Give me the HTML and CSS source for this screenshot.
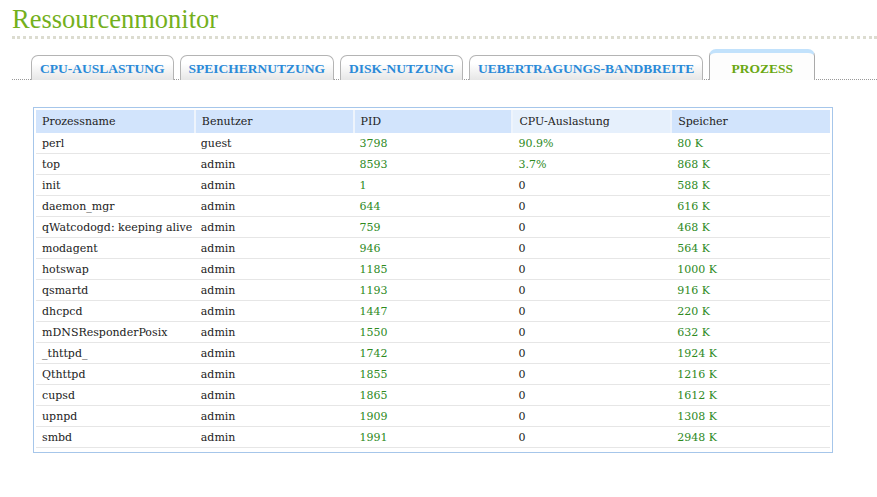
FILE: index.html
```html
<!DOCTYPE html>
<html lang="de">
<head>
    <meta charset="UTF-8">
    <title>Ressourcenmonitor</title>
    <link rel="stylesheet" href="styles.css">
</head>
<body>
    <h1 class="title">Ressourcenmonitor</h1>
    <div class="tabs">
        <a class="tab">CPU-AUSLASTUNG</a>
        <a class="tab">SPEICHERNUTZUNG</a>
        <a class="tab">DISK-NUTZUNG</a>
        <a class="tab">UEBERTRAGUNGS-BANDBREITE</a>
        <a class="tab active">PROZESS</a>
    </div>
    <div class="grid-box">
        <table class="grid">
            <thead>
                <tr>
                    <th>Prozessname</th>
                    <th>Benutzer</th>
                    <th>PID</th>
                    <th class="sorted">CPU-Auslastung</th>
                    <th>Speicher</th>
                </tr>
            </thead>
            <tbody>
                <tr><td>perl</td><td>guest</td><td class="num">3798</td><td class="num">90.9%</td><td class="num">80 K</td></tr>
                <tr><td>top</td><td>admin</td><td class="num">8593</td><td class="num">3.7%</td><td class="num">868 K</td></tr>
                <tr><td>init</td><td>admin</td><td class="num">1</td><td>0</td><td class="num">588 K</td></tr>
                <tr><td>daemon_mgr</td><td>admin</td><td class="num">644</td><td>0</td><td class="num">616 K</td></tr>
                <tr><td>qWatcodogd: keeping alive</td><td>admin</td><td class="num">759</td><td>0</td><td class="num">468 K</td></tr>
                <tr><td>modagent</td><td>admin</td><td class="num">946</td><td>0</td><td class="num">564 K</td></tr>
                <tr><td>hotswap</td><td>admin</td><td class="num">1185</td><td>0</td><td class="num">1000 K</td></tr>
                <tr><td>qsmartd</td><td>admin</td><td class="num">1193</td><td>0</td><td class="num">916 K</td></tr>
                <tr><td>dhcpcd</td><td>admin</td><td class="num">1447</td><td>0</td><td class="num">220 K</td></tr>
                <tr><td>mDNSResponderPosix</td><td>admin</td><td class="num">1550</td><td>0</td><td class="num">632 K</td></tr>
                <tr><td>_thttpd_</td><td>admin</td><td class="num">1742</td><td>0</td><td class="num">1924 K</td></tr>
                <tr><td>Qthttpd</td><td>admin</td><td class="num">1855</td><td>0</td><td class="num">1216 K</td></tr>
                <tr><td>cupsd</td><td>admin</td><td class="num">1865</td><td>0</td><td class="num">1612 K</td></tr>
                <tr><td>upnpd</td><td>admin</td><td class="num">1909</td><td>0</td><td class="num">1308 K</td></tr>
                <tr><td>smbd</td><td>admin</td><td class="num">1991</td><td>0</td><td class="num">2948 K</td></tr>
            </tbody>
        </table>
    </div>
</body>
</html>
```

FILE: styles.css
```css
body {
    margin: 0;
    padding: 0 0 0 12px;
    background-color: white;
    font-family: "DejaVu Serif", serif;
    color: #222;
}
.title {
    margin: 0;
    padding-top: 4px;
    height: 32px;
    font-family: "Liberation Serif", serif;
    font-size: 26.5px;
    line-height: 30px;
    font-weight: normal;
    color: #74b01c;
    border-bottom: 3px dotted #dcdcd0;
}
.tabs {
    display: flex;
    align-items: flex-end;
    gap: 6px;
    margin-top: 11px;
    padding-left: 19px;
    height: 29px;
    border-bottom: 1px dotted #999;
}
.tab {
    display: block;
    height: 24px;
    line-height: 25px;
    padding: 0 8px;
    margin-bottom: -1px;
    border: 1px solid #b4b4b4;
    border-bottom: none;
    border-radius: 7px 7px 0 0;
    background: linear-gradient(#ffffff, #ffffff 30%, #e6e6e6);
    font-family: "Liberation Serif", serif;
    font-weight: bold;
    font-size: 13.5px;
    color: #2a8ad8;
}
.tab.active {
    height: 27px;
    line-height: 32px;
    padding: 0 21px;
    border-color: #aaa;
    border-top: 4px solid #c2e2fc;
    background: #fdfdfd;
    color: #6aa812;
}
.grid-box {
    width: 794px;
    margin: 27px 0 0 21px;
    padding: 2px 2px 4px 2px;
    border: 1px solid #a6c6ea;
}
.grid {
    width: 100%;
    border-collapse: collapse;
    table-layout: fixed;
    font-size: 11px;
}
.grid th {
    height: 23px;
    padding: 0 6px;
    text-align: left;
    font-weight: normal;
    background-color: #d2e4fc;
    border-left: 2px solid #eef4fc;
}
.grid th:first-child {
    border-left: none;
}
.grid th.sorted {
    background-color: #e6f0fc;
}
.grid td {
    height: 20px;
    padding: 0 6px;
    border-bottom: 1px solid #e6e6e6;
    white-space: nowrap;
    overflow: hidden;
}
.grid td.num {
    color: #2e8a1e;
}
```
